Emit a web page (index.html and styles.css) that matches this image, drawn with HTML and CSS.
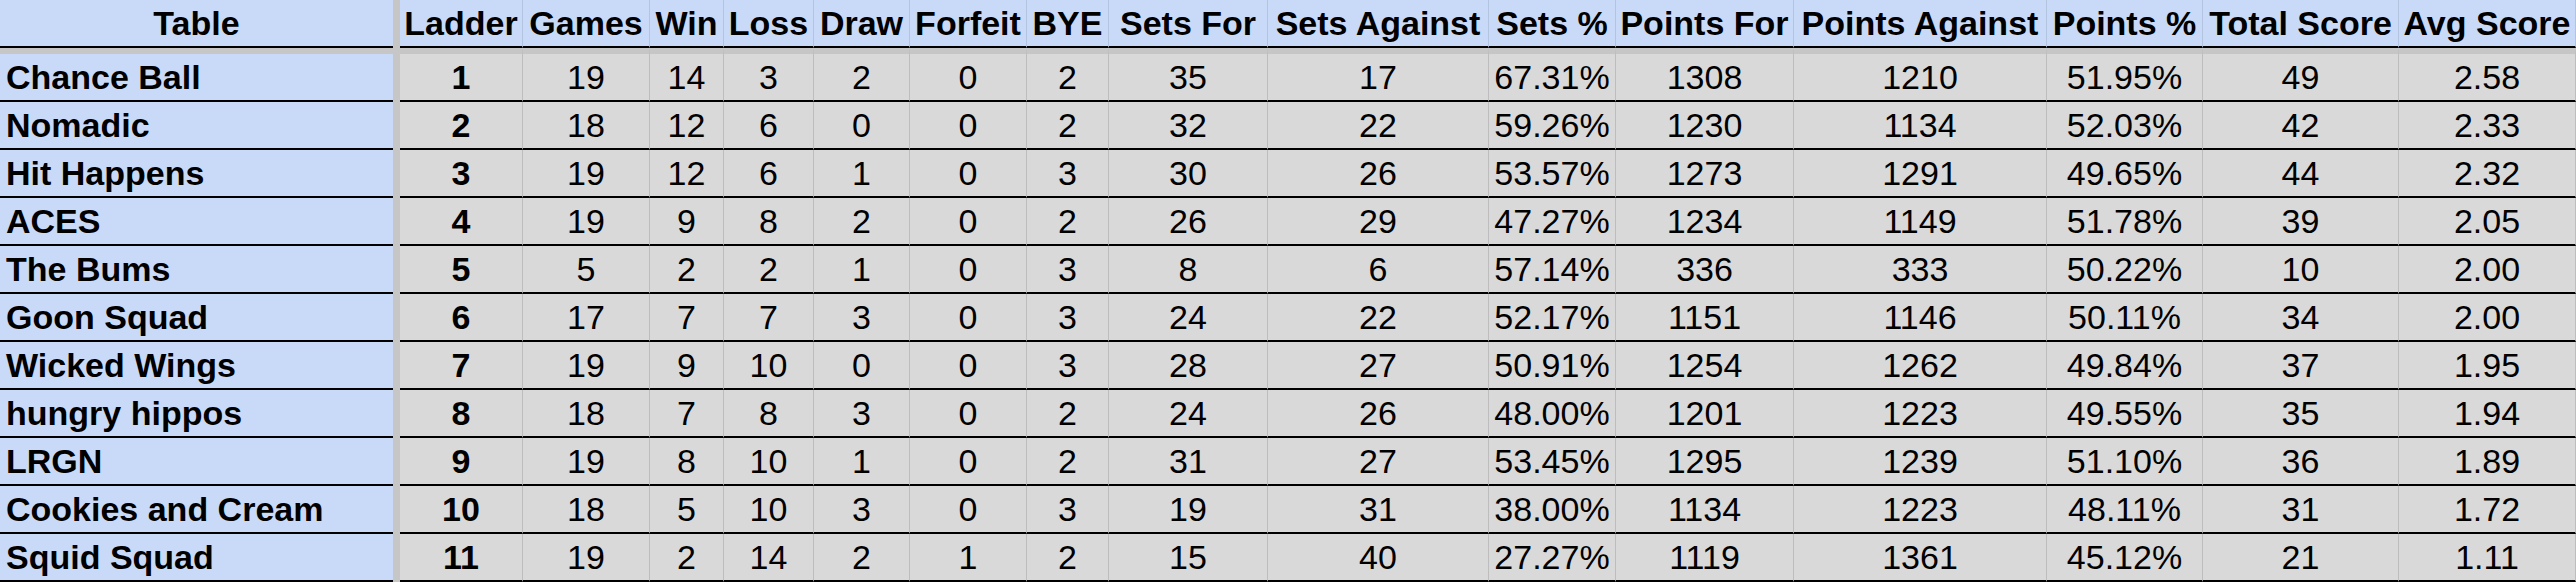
FILE: index.html
```html
<!DOCTYPE html>
<html lang="en">
<head>
<meta charset="utf-8">
<title>Ladder Table</title>
<link rel="stylesheet" href="styles.css">
</head>
<body>
<div class="sheet" role="table">
  <div class="freeze-v" aria-hidden="true"></div>
  <div class="row head" role="row">
    <div class="cell hd name-hd">Table</div>
    <div class="cell hd">Ladder</div>
    <div class="cell hd">Games</div>
    <div class="cell hd">Win</div>
    <div class="cell hd">Loss</div>
    <div class="cell hd">Draw</div>
    <div class="cell hd">Forfeit</div>
    <div class="cell hd">BYE</div>
    <div class="cell hd">Sets For</div>
    <div class="cell hd">Sets Against</div>
    <div class="cell hd">Sets %</div>
    <div class="cell hd">Points For</div>
    <div class="cell hd">Points Against</div>
    <div class="cell hd">Points %</div>
    <div class="cell hd">Total Score</div>
    <div class="cell hd">Avg Score</div>
  </div>
  <div class="row first" role="row">
    <div class="cell name">Chance Ball</div><div class="cell rank">1</div><div class="cell">19</div><div class="cell">14</div><div class="cell">3</div><div class="cell">2</div><div class="cell">0</div><div class="cell">2</div><div class="cell">35</div><div class="cell">17</div><div class="cell">67.31%</div><div class="cell">1308</div><div class="cell">1210</div><div class="cell">51.95%</div><div class="cell">49</div><div class="cell">2.58</div>
  </div>
  <div class="row" role="row">
    <div class="cell name">Nomadic</div><div class="cell rank">2</div><div class="cell">18</div><div class="cell">12</div><div class="cell">6</div><div class="cell">0</div><div class="cell">0</div><div class="cell">2</div><div class="cell">32</div><div class="cell">22</div><div class="cell">59.26%</div><div class="cell">1230</div><div class="cell">1134</div><div class="cell">52.03%</div><div class="cell">42</div><div class="cell">2.33</div>
  </div>
  <div class="row" role="row">
    <div class="cell name">Hit Happens</div><div class="cell rank">3</div><div class="cell">19</div><div class="cell">12</div><div class="cell">6</div><div class="cell">1</div><div class="cell">0</div><div class="cell">3</div><div class="cell">30</div><div class="cell">26</div><div class="cell">53.57%</div><div class="cell">1273</div><div class="cell">1291</div><div class="cell">49.65%</div><div class="cell">44</div><div class="cell">2.32</div>
  </div>
  <div class="row" role="row">
    <div class="cell name">ACES</div><div class="cell rank">4</div><div class="cell">19</div><div class="cell">9</div><div class="cell">8</div><div class="cell">2</div><div class="cell">0</div><div class="cell">2</div><div class="cell">26</div><div class="cell">29</div><div class="cell">47.27%</div><div class="cell">1234</div><div class="cell">1149</div><div class="cell">51.78%</div><div class="cell">39</div><div class="cell">2.05</div>
  </div>
  <div class="row" role="row">
    <div class="cell name">The Bums</div><div class="cell rank">5</div><div class="cell">5</div><div class="cell">2</div><div class="cell">2</div><div class="cell">1</div><div class="cell">0</div><div class="cell">3</div><div class="cell">8</div><div class="cell">6</div><div class="cell">57.14%</div><div class="cell">336</div><div class="cell">333</div><div class="cell">50.22%</div><div class="cell">10</div><div class="cell">2.00</div>
  </div>
  <div class="row" role="row">
    <div class="cell name">Goon Squad</div><div class="cell rank">6</div><div class="cell">17</div><div class="cell">7</div><div class="cell">7</div><div class="cell">3</div><div class="cell">0</div><div class="cell">3</div><div class="cell">24</div><div class="cell">22</div><div class="cell">52.17%</div><div class="cell">1151</div><div class="cell">1146</div><div class="cell">50.11%</div><div class="cell">34</div><div class="cell">2.00</div>
  </div>
  <div class="row" role="row">
    <div class="cell name">Wicked Wings</div><div class="cell rank">7</div><div class="cell">19</div><div class="cell">9</div><div class="cell">10</div><div class="cell">0</div><div class="cell">0</div><div class="cell">3</div><div class="cell">28</div><div class="cell">27</div><div class="cell">50.91%</div><div class="cell">1254</div><div class="cell">1262</div><div class="cell">49.84%</div><div class="cell">37</div><div class="cell">1.95</div>
  </div>
  <div class="row" role="row">
    <div class="cell name">hungry hippos</div><div class="cell rank">8</div><div class="cell">18</div><div class="cell">7</div><div class="cell">8</div><div class="cell">3</div><div class="cell">0</div><div class="cell">2</div><div class="cell">24</div><div class="cell">26</div><div class="cell">48.00%</div><div class="cell">1201</div><div class="cell">1223</div><div class="cell">49.55%</div><div class="cell">35</div><div class="cell">1.94</div>
  </div>
  <div class="row" role="row">
    <div class="cell name">LRGN</div><div class="cell rank">9</div><div class="cell">19</div><div class="cell">8</div><div class="cell">10</div><div class="cell">1</div><div class="cell">0</div><div class="cell">2</div><div class="cell">31</div><div class="cell">27</div><div class="cell">53.45%</div><div class="cell">1295</div><div class="cell">1239</div><div class="cell">51.10%</div><div class="cell">36</div><div class="cell">1.89</div>
  </div>
  <div class="row" role="row">
    <div class="cell name">Cookies and Cream</div><div class="cell rank">10</div><div class="cell">18</div><div class="cell">5</div><div class="cell">10</div><div class="cell">3</div><div class="cell">0</div><div class="cell">3</div><div class="cell">19</div><div class="cell">31</div><div class="cell">38.00%</div><div class="cell">1134</div><div class="cell">1223</div><div class="cell">48.11%</div><div class="cell">31</div><div class="cell">1.72</div>
  </div>
  <div class="row" role="row">
    <div class="cell name">Squid Squad</div><div class="cell rank">11</div><div class="cell">19</div><div class="cell">2</div><div class="cell">14</div><div class="cell">2</div><div class="cell">1</div><div class="cell">2</div><div class="cell">15</div><div class="cell">40</div><div class="cell">27.27%</div><div class="cell">1119</div><div class="cell">1361</div><div class="cell">45.12%</div><div class="cell">21</div><div class="cell">1.11</div>
  </div>
</div>
</body>
</html>
```

FILE: styles.css
```css
html, body {
  margin: 0;
  padding: 0;
  background: #ffffff;
}

.sheet {
  display: grid;
  grid-template-columns: 393px 7px 123px 127px 74px 90px 96px 117px 82px 159px 221px 127px 178px 253px 156px 196px 177px;
  grid-template-rows: 48px 54px repeat(10, 48px);
  width: 2576px;
  font-family: "Liberation Sans", Arial, sans-serif;
  font-size: 34px;
  color: #000;
}

.row {
  display: contents;
}

.freeze-v {
  grid-column: 2;
  grid-row: 1 / -1;
  background: #c6c6c6;
}

.cell {
  box-sizing: border-box;
  background: #d9d9d9;
  border-right: 1px solid #bdbdbd;
  border-bottom: 2px solid #000;
  padding-top: 1px;
  line-height: 45px;
  text-align: center;
  white-space: nowrap;
  overflow: hidden;
}

.first .cell {
  border-top: 6px solid #c6c6c6;
}

.hd {
  background: #c9daf8;
  font-weight: bold;
  border-right-color: #b3c4e0;
}

.name-hd {
  border-right: none;
}

.name {
  background: #c9daf8;
  font-weight: bold;
  text-align: left;
  padding-left: 6px;
  border-right: none;
}

.rank {
  font-weight: bold;
}
```
